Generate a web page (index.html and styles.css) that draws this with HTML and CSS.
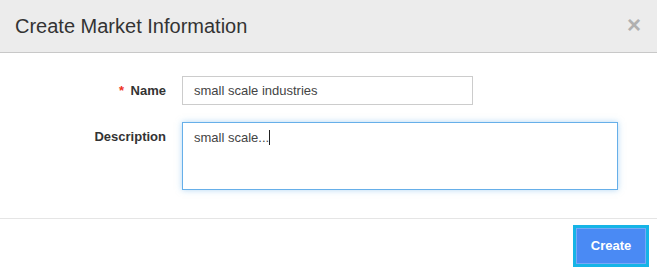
FILE: index.html
```html
<!DOCTYPE html>
<html lang="en">
<head>
  <meta charset="UTF-8">
  <title>Create Market Information</title>
  <link rel="stylesheet" href="styles.css">
</head>
<body>

  <div class="modal">
    <div class="modal-header">
      <h3>Create Market Information</h3>
      <span class="close">&times;</span>
    </div>

    <div class="modal-body">
      <div class="form-row">
        <label for="name"><span class="req">*</span> Name</label>
        <input type="text" id="name" class="input-name" value="small scale industries">
      </div>
      <div class="form-row">
        <label for="description">Description</label>
        <div class="textarea focused" id="description">small scale...<span class="caret"></span></div>
      </div>
    </div>

    <div class="modal-footer">
      <button class="btn-create">Create</button>
    </div>
  </div>

</body>
</html>
```

FILE: styles.css
```css
body {
  margin: 0;
  font-family: "Liberation Sans", Arial, sans-serif;
  background: #fff;
  color: #333;
}

.modal {
  width: 657px;
  height: 274px;
  display: flex;
  flex-direction: column;
}

.modal-header {
  height: 52px;
  background: #ececec;
  border-bottom: 1px solid #c8c8c8;
  display: flex;
  align-items: center;
  justify-content: space-between;
  padding: 0 16px 0 15px;
}

.modal-header h3 {
  margin: 0;
  font-size: 20px;
  font-weight: normal;
  color: #333;
}

.close {
  font-size: 24px;
  font-weight: bold;
  color: #b0b0b0;
  line-height: 1;
  margin-top: -2px;
}

.modal-body {
  padding: 23px 0 0 0;
  height: 142px;
  border-bottom: 1px solid #e5e5e5;
}

.form-row {
  display: grid;
  grid-template-columns: 166px auto;
  column-gap: 16px;
  margin-bottom: 17px;
}

label {
  text-align: right;
  font-size: 13px;
  font-weight: bold;
  color: #333;
  padding-top: 7px;
}

.req {
  color: #e32;
  margin-right: 3px;
}

.input-name {
  width: 291px;
  height: 29px;
  box-sizing: border-box;
  border: 1px solid #ccc;
  padding: 0 11px;
  font-family: "Liberation Sans", Arial, sans-serif;
  font-size: 13px;
  color: #444;
  outline: none;
}

.textarea {
  width: 436px;
  height: 68px;
  box-sizing: border-box;
  border: 1px solid #66afe9;
  box-shadow: 0 0 6px rgba(102, 175, 233, 0.5);
  padding: 7px 11px;
  font-size: 13px;
  color: #444;
}

.caret {
  display: inline-block;
  width: 1px;
  height: 15px;
  background: #222;
  vertical-align: -3px;
}

.modal-footer {
  flex: 1;
  display: flex;
  justify-content: flex-end;
  align-items: center;
  padding-right: 11px;
}

.btn-create {
  width: 70px;
  height: 36px;
  background: #4a8af4;
  color: #fff;
  border: 1px solid #76a8f7;
  outline: 3px solid #16b4e6;
  outline-offset: 0;
  font-family: "Liberation Sans", Arial, sans-serif;
  font-size: 13px;
  font-weight: bold;
  cursor: pointer;
  margin-top: -2px;
}
```
